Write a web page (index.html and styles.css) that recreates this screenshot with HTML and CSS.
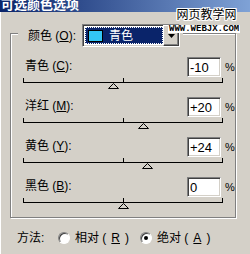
FILE: index.html
```html
<!DOCTYPE html>
<html>
<head>
	<meta charset="utf-8">
	<title>可选颜色选项</title>
	<link rel="stylesheet" href="styles.css">
</head>
<body>
<div class="window">
	<div class="titlebar"><span>可选颜色选项</span></div>

	<div class="watermark">
		<div class="wm-name">网页教学网</div>
		<div class="wm-url">WWW.WEBJX.COM</div>
	</div>

	<div class="group">
		<div class="legend">
			<span class="legend-label">颜色 (<u>O</u>):</span>
			<div class="select">
				<div class="select-value"><span class="swatch"></span>青色</div>
				<div class="select-btn">
					<svg width="7" height="4" viewBox="0 0 7 4"><path d="M0 0H7L3.5 4Z" fill="#000"/></svg>
				</div>
			</div>
		</div>

		<div class="rows">
			<div class="row">
				<div class="row-top">
					<span class="row-label">青色 (<u>C</u>):</span>
					<input class="num" type="text" value="-10" readonly>
					<span class="pct">%</span>
				</div>
				<div class="slider">
					<div class="ticks"><i></i><i></i><i></i></div>
					<div class="track"></div>
					<svg class="thumb" style="margin-left: 85px" width="11" height="6" viewBox="0 0 11 6"><path d="M5.5 0.5L10.5 5.5H0.5Z" fill="#d4d0c8" stroke="#000"/></svg>
				</div>
			</div>
			<div class="row">
				<div class="row-top">
					<span class="row-label">洋红 (<u>M</u>):</span>
					<input class="num" type="text" value="+20" readonly>
					<span class="pct">%</span>
				</div>
				<div class="slider">
					<div class="ticks"><i></i><i></i><i></i></div>
					<div class="track"></div>
					<svg class="thumb" style="margin-left: 115px" width="11" height="6" viewBox="0 0 11 6"><path d="M5.5 0.5L10.5 5.5H0.5Z" fill="#d4d0c8" stroke="#000"/></svg>
				</div>
			</div>
			<div class="row">
				<div class="row-top">
					<span class="row-label">黄色 (<u>Y</u>):</span>
					<input class="num" type="text" value="+24" readonly>
					<span class="pct">%</span>
				</div>
				<div class="slider">
					<div class="ticks"><i></i><i></i><i></i></div>
					<div class="track"></div>
					<svg class="thumb" style="margin-left: 119px" width="11" height="6" viewBox="0 0 11 6"><path d="M5.5 0.5L10.5 5.5H0.5Z" fill="#d4d0c8" stroke="#000"/></svg>
				</div>
			</div>
			<div class="row">
				<div class="row-top">
					<span class="row-label">黑色 (<u>B</u>):</span>
					<input class="num" type="text" value="0" readonly>
					<span class="pct">%</span>
				</div>
				<div class="slider">
					<div class="ticks"><i></i><i></i><i></i></div>
					<div class="track"></div>
					<svg class="thumb" style="margin-left: 95px" width="11" height="6" viewBox="0 0 11 6"><path d="M5.5 0.5L10.5 5.5H0.5Z" fill="#d4d0c8" stroke="#000"/></svg>
				</div>
			</div>
		</div>
	</div>

	<div class="method">
		<span class="method-label">方法:</span>
		<div class="options">
			<label class="radio"><span class="dot"></span>相对 (<u>R</u>)</label>
			<label class="radio"><span class="dot checked"></span>绝对 (<u>A</u>)</label>
		</div>
	</div>
</div>
</body>
</html>
```

FILE: styles.css
```css
body {
	margin: 0;
	background: #d4d0c8;
	font-family: "Liberation Sans", "Noto Sans CJK SC", sans-serif;
	font-size: 12px;
	line-height: 14px;
	color: #000;
}

.window {
	position: relative;
	width: 250px;
	height: 254px;
	overflow: hidden;
	box-shadow: inset 1px 0 0 #fff;
}

/* title bar, top of it is outside the shot */
.titlebar {
	height: 12px;
	overflow: hidden;
	background: linear-gradient(to right, #0a246a, #7fa2d6);
	color: #fff;
	font-weight: bold;
	font-size: 13px;
	line-height: 12px;
	padding-left: 1px;
}

.titlebar span {
	display: block;
	margin-top: -1px;
}

/* watermark over the corner */
.watermark {
	position: absolute;
	top: 8px;
	left: 168px;
	display: flex;
	flex-direction: column;
	align-items: center;
}

.wm-name {
	font-size: 12px;
	line-height: 14px;
	color: #000;
	text-shadow: 1px 0 #fff, -1px 0 #fff, 0 1px #fff, 0 -1px #fff, 1px 1px #fff, -1px -1px #fff, 1px -1px #fff, -1px 1px #fff;
	margin-left: 5px;
}

.wm-url {
	margin-top: 3px;
	background: #fff;
	font-family: "Liberation Mono", monospace;
	font-weight: bold;
	font-size: 9px;
	line-height: 8px;
	padding: 0 1px;
}

/* group box */
.group {
	box-sizing: border-box;
	width: 226px;
	height: 185px;
	margin: 21px 0 0 10px;
	border: 1px solid #808080;
	box-shadow: inset 1px 1px 0 #fff, 1px 1px 0 #fff;
}

.legend {
	display: flex;
	align-items: center;
	width: fit-content;
	height: 23px;
	margin: -10px 0 0 7px;
	padding: 0 3px 0 10px;
	background: #d4d0c8;
}

.legend-label {
	width: 54px;
}

.select {
	box-sizing: border-box;
	display: flex;
	width: 98px;
	height: 23px;
	padding: 2px;
	border: 1px solid;
	border-color: #808080 #fff #fff #808080;
	box-shadow: inset 1px 1px 0 #404040, inset -1px -1px 0 #d4d0c8;
	background: #fff;
}

.select-value {
	flex: 1;
	display: flex;
	align-items: center;
	gap: 6px;
	padding-left: 3px;
	background: #0a246a;
	color: #fff;
	outline: 1px dotted #fff;
	outline-offset: -1px;
}

.swatch {
	box-sizing: border-box;
	width: 15px;
	height: 12px;
	background: #33c6f4;
	border: 1px solid #000;
}

.select-btn {
	box-sizing: border-box;
	width: 16px;
	margin: -2px -2px -2px 0;
	display: flex;
	align-items: center;
	justify-content: center;
	background: #d4d0c8;
	border: 1px solid;
	border-color: #fff #404040 #404040 #fff;
	box-shadow: inset -1px -1px 0 #808080;
}

/* slider rows */
.rows {
	margin-top: 10px;
	padding-left: 12px;
}

.row {
	height: 40px;
}

.row-top {
	display: flex;
	align-items: center;
	height: 20px;
}

.row-label {
	flex: 1;
	padding-left: 2px;
	margin-top: -3px;
}

.num {
	box-sizing: border-box;
	width: 34px;
	height: 20px;
	margin: 0;
	padding: 0 0 0 2px;
	border: 1px solid;
	border-color: #808080 #fff #fff #808080;
	box-shadow: inset 1px 1px 0 #404040, inset -1px -1px 0 #d4d0c8;
	background: #fff;
	font-family: "Liberation Sans", sans-serif;
	font-size: 13px;
	color: #000;
	outline: none;
}

.pct {
	width: 14px;
	padding-left: 4px;
	box-sizing: border-box;
	font-size: 11px;
}

.slider {
	width: 200px;
	padding-top: 1px;
}

.ticks {
	display: flex;
	justify-content: space-between;
	height: 4px;
}

.ticks i {
	width: 1px;
	background: #000;
}

.track {
	height: 1px;
	background: #000;
}

.thumb {
	display: block;
}

/* method radios */
.method {
	display: flex;
	align-items: center;
	height: 40px;
	padding-left: 17px;
}

.method-label {
	width: 41px;
}

.options {
	display: flex;
	gap: 11px;
}

.radio {
	display: flex;
	align-items: center;
	gap: 5px;
}

.dot {
	box-sizing: border-box;
	width: 12px;
	height: 12px;
	border-radius: 50%;
	border: 1px solid;
	border-color: #808080 #fff #fff #808080;
	box-shadow: inset 1px 1px 0 #404040;
	background: #fff;
	display: flex;
	align-items: center;
	justify-content: center;
}

.dot.checked::after {
	content: "";
	width: 4px;
	height: 4px;
	border-radius: 50%;
	background: #000;
}
```
